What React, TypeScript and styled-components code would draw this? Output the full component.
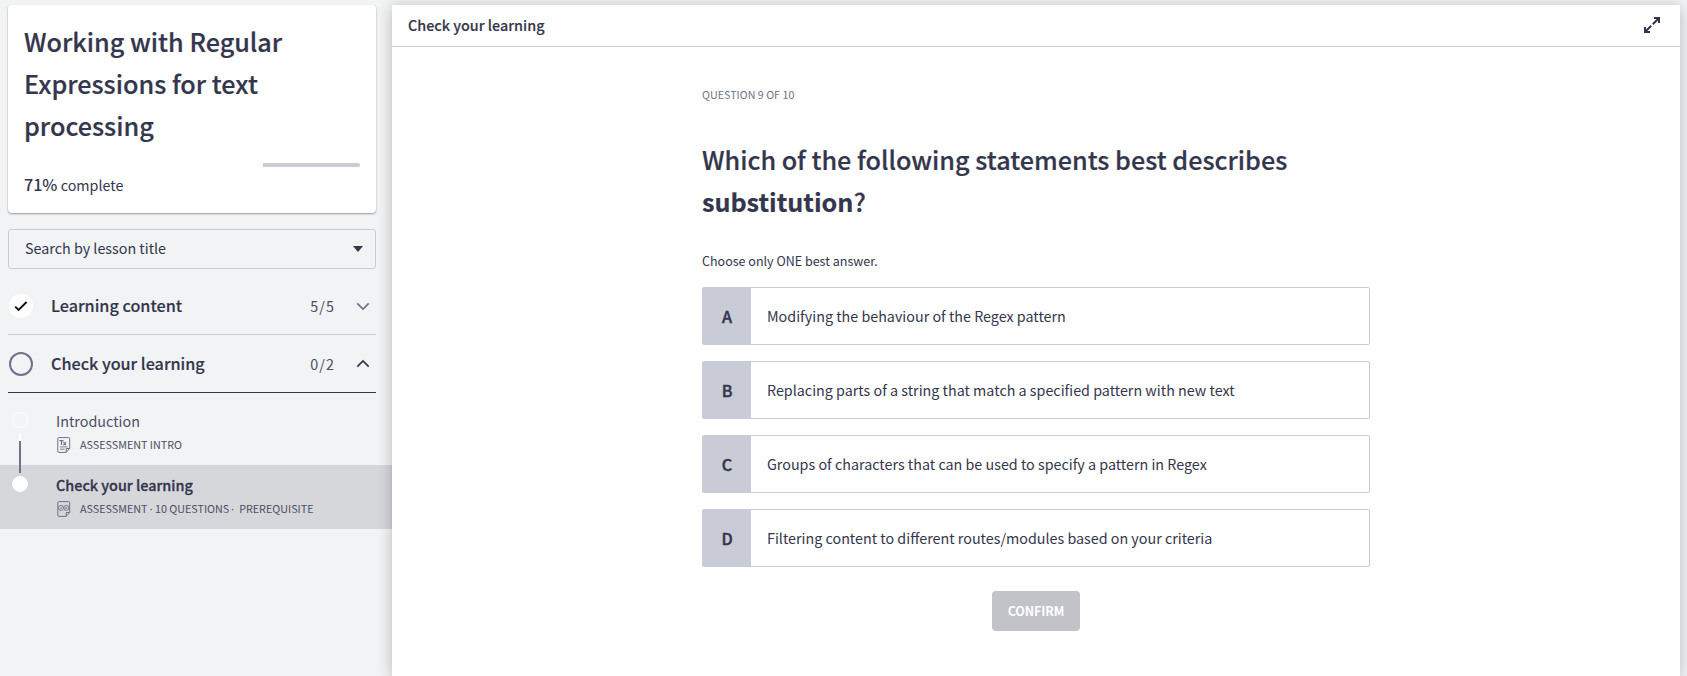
import React from 'react';
import styled, { createGlobalStyle } from 'styled-components';

const ink = '#33364c';
const line = '#c9ccd6';
const muted = '#6f7289';
const soft = '#4b4e64';

const GlobalStyle = createGlobalStyle`
  *, *::before, *::after { box-sizing: border-box; }
  body {
    margin: 0;
    background: #f1f3f5;
    color: ${ink};
    font-family: 'Noto Sans CJK SC', 'Noto Sans', sans-serif;
    overflow: hidden;
  }
  h1, h2, p { margin: 0; }
`;

const Page = styled.div`
  display: flex;
  width: 1687px;
  height: 676px;
  padding: 5px 7px 0 0;
  overflow: hidden;
`;

const Sidebar = styled.aside`
  flex: 0 0 392px;
  display: flex;
  flex-direction: column;
`;

const Text = styled.span<{ $size: number; $weight?: number; $track?: number; $color?: string; $stroke?: number }>`
  font-size: ${(p) => p.$size}px;
  font-weight: ${(p) => p.$weight ?? 400};
  letter-spacing: ${(p) => p.$track ?? 0}px;
  color: ${(p) => p.$color ?? ink};
  -webkit-text-stroke: ${(p) => p.$stroke ?? 0}px ${ink};
  white-space: nowrap;
`;

const CourseCard = styled.section`
  width: 368px;
  height: 208px;
  margin-left: 8px;
  padding: 15px 16px 0;
  background: #fff;
  border-radius: 4px;
  box-shadow: 0 1px 2px rgba(0, 0, 0, 0.38);
`;

const CourseTitle = styled.h1`
  height: 126px;
  font-size: 25.2px;
  font-weight: 500;
  line-height: 42px;
  white-space: nowrap;
  -webkit-text-stroke: 0.2px ${ink};
`;

const Progress = styled.div`
  display: flex;
  justify-content: flex-end;
  height: 4px;
  margin-top: 17px;
`;

const Remaining = styled.div`
  width: 97px;
  border-radius: 0 2px 2px 0;
  background: ${line};
`;

const Complete = styled.p`
  margin-top: 5px;
  line-height: 24px;
`;

const Search = styled.div`
  display: flex;
  align-items: center;
  justify-content: space-between;
  width: 368px;
  height: 40px;
  margin: 16px 0 8px 8px;
  padding: 0 12px 0 16px;
  border: 1px solid ${line};
  border-radius: 3px;
`;

const SearchLabel = styled.div`
  height: 38px;
  line-height: 35px;
`;

const Section = styled.div<{ $open?: boolean }>`
  display: flex;
  align-items: center;
  width: 368px;
  height: 58px;
  margin-left: 8px;
  padding: 0 6px 0 1px;
  border-bottom: 1px solid ${(p) => (p.$open ? ink : line)};
`;

const SectionMark = styled.div<{ $done?: boolean }>`
  display: flex;
  align-items: center;
  justify-content: center;
  width: 24px;
  height: 24px;
  margin-right: 18px;
  border-radius: 50%;
  border: ${(p) => (p.$done ? 'none' : `2px solid ${muted}`)};
  background: ${(p) => (p.$done ? '#fff' : 'transparent')};
`;

const SectionName = styled.div`
  flex: 1;
  padding-bottom: 2px;
`;

const Chevron = styled.svg`
  margin-left: 21px;
`;

const Lessons = styled.div`
  padding-top: 8px;
`;

const Lesson = styled.div<{ $active?: boolean }>`
  display: flex;
  height: 64px;
  padding-left: 12px;
  background: ${(p) => (p.$active ? '#d6d7db' : 'transparent')};
`;

const Rail = styled.div`
  display: flex;
  flex-direction: column;
  align-items: center;
  width: 16px;
  height: 72px;
  margin-right: 28px;
  padding-top: 11px;
  z-index: 1;
`;

const Dot = styled.div<{ $filled?: boolean }>`
  flex: none;
  width: 16px;
  height: 16px;
  border: 1px solid #fff;
  border-radius: 50%;
  background: ${(p) => (p.$filled ? '#fff' : 'transparent')};
`;

const Connector = styled.div`
  flex: none;
  width: 2px;
  height: 40px;
  margin-top: 5px;
  background: linear-gradient(#fff 8px, ${muted} 8px);
`;

const LessonBody = styled.div`
  display: flex;
  flex-direction: column;
  padding-top: 7px;
`;

const LessonTitle = styled.div`
  height: 25px;
  line-height: 24px;
`;

const LessonMeta = styled.div`
  display: flex;
  align-items: center;
  height: 24px;
  line-height: 24px;
  gap: 9px;
  padding-left: 1px;
`;

const Separator = styled.span<{ $left: number; $right: number }>`
  margin: 0 ${(p) => p.$right}px 0 ${(p) => p.$left}px;
  font-family: 'Noto Sans', sans-serif;
  line-height: 1;
`;

const Main = styled.main`
  flex: 1;
  display: flex;
  flex-direction: column;
  background: #fff;
  box-shadow: 0 2px 14px rgba(0, 0, 0, 0.24);
  z-index: 2;
`;

const TopBar = styled.header`
  display: flex;
  align-items: center;
  justify-content: space-between;
  height: 42px;
  padding: 0 19px 2px 16px;
  border-bottom: 1px solid ${line};
  line-height: 39px;
`;

const Question = styled.section`
  display: flex;
  flex-direction: column;
  width: 668px;
  margin: 33px 0 0 310px;
`;

const Counter = styled.p`
  height: 24px;
  line-height: 24px;
`;

const Prompt = styled.h2`
  margin-top: 34px;
  font-size: 25.18px;
  font-weight: 500;
  line-height: 42px;
  white-space: nowrap;
  -webkit-text-stroke: 0.2px ${ink};
  b { font-weight: 700; }
`;

const Hint = styled.p`
  margin-top: 25px;
  height: 24px;
  line-height: 24px;
`;

const Options = styled.div`
  display: flex;
  flex-direction: column;
  gap: 16px;
  margin-top: 16px;
`;

const Option = styled.div`
  display: flex;
  height: 58px;
  border: 1px solid ${line};
  border-radius: 2px;
  line-height: 56px;
`;

const OptionKey = styled.div`
  width: 48px;
  margin-right: 16px;
  background: ${line};
  text-align: center;
`;

const Confirm = styled.button`
  align-self: center;
  width: 88px;
  height: 40px;
  margin-top: 24px;
  padding: 0;
  border: 0;
  border-radius: 4px;
  background: #c2c2c9;
  font-family: inherit;
  line-height: 38px;
`;

function DocIcon({ kind }: { kind: 'text' | 'quiz' }) {
  return (
    <svg width="14" height="16" viewBox="0 0 14 16" fill="none" stroke={muted} strokeWidth="1">
      <path d="M1.800.6h9.900a1 1 0 0 1 1 1v9.800l-3.600 4H1.800a1 1 0 0 1-1-1V1.600a1 1 0 0 1 1-1z" />
      <path d="M12.600 11.500H9.200v3.800" />
      {kind === 'text' ? (
        <>
          <path d="M2.500 3.700h4M4.500 3.700v4.200M6.400 5.200l2.600 2.800M9 5.200L6.400 8" strokeWidth="1.200" />
          <path d="M3 9.900h7.500M3 12.200h4.500" strokeWidth="0.900" />
        </>
      ) : (
        <>
          <circle cx="4" cy="6.900" r="2.500" strokeWidth="0.900" />
          <circle cx="9.400" cy="6.900" r="2.500" strokeWidth="0.900" />
          <path d="M2.900 6.800l.9.900 1.700-2M8.600 6.100l1.600 1.600M10.200 6.100L8.600 7.700" strokeWidth="0.900" />
        </>
      )}
    </svg>
  );
}

function ChevronIcon({ up }: { up?: boolean }) {
  return (
    <Chevron width="14" height="14" viewBox="0 0 14 14" fill="none" stroke={up ? ink : muted} strokeWidth="1.700">
      <path d={up ? 'M1.300 9.700L7 4l5.700 5.700' : 'M1.300 4.300L7 10l5.700-5.700'} />
    </Chevron>
  );
}

const options = [
  ['A', 'Modifying the behaviour of the Regex pattern'],
  ['B', 'Replacing parts of a string that match a specified pattern with new text'],
  ['C', 'Groups of characters that can be used to specify a pattern in Regex'],
  ['D', 'Filtering content to different routes/modules based on your criteria'],
];

export default function App() {
  return (
    <Page>
      <GlobalStyle />
      <Sidebar>
        <CourseCard>
          <CourseTitle>
            Working with Regular<br />Expressions for text<br />processing
          </CourseTitle>
          <Progress><Remaining /></Progress>
          <Complete>
            <Text $size={16.1} $weight={500}>71%</Text>
            <Text $size={14.32}> complete</Text>
          </Complete>
        </CourseCard>
        <Search>
          <SearchLabel><Text $size={14.32}>Search by lesson title</Text></SearchLabel>
          <svg width="10" height="6" viewBox="0 0 10 6"><path d="M0 0h10L5 6z" fill={ink} /></svg>
        </Search>
        <Section>
          <SectionMark $done>
            <svg width="14" height="12" viewBox="0 0 14 12" fill="none" stroke="#111" strokeWidth="1.900">
              <path d="M1.200 6.600l3.400 3.300L12.600 2" />
            </svg>
          </SectionMark>
          <SectionName><Text $size={16.18} $weight={500} $stroke={0.15}>Learning content</Text></SectionName>
          <Text $size={14.32} $track={1.1} $color={soft}>5/5</Text>
          <ChevronIcon />
        </Section>
        <Section $open>
          <SectionMark />
          <SectionName><Text $size={16.18} $weight={500} $stroke={0.15}>Check your learning</Text></SectionName>
          <Text $size={14.32} $track={1.1} $color={soft}>0/2</Text>
          <ChevronIcon up />
        </Section>
        <Lessons>
          <Lesson>
            <Rail><Dot /><Connector /></Rail>
            <LessonBody>
              <LessonTitle><Text $size={14.35} $color={soft}>Introduction</Text></LessonTitle>
              <LessonMeta>
                <DocIcon kind="text" />
                <Text $size={10.76} $color={soft}>ASSESSMENT INTRO</Text>
              </LessonMeta>
            </LessonBody>
          </Lesson>
          <Lesson $active>
            <Rail><Dot $filled /></Rail>
            <LessonBody>
              <LessonTitle><Text $size={14.4} $weight={500} $stroke={0.3}>Check your learning</Text></LessonTitle>
              <LessonMeta>
                <DocIcon kind="quiz" />
                <Text $size={10.76} $color={soft}>
                  ASSESSMENT<Separator $left={2.3} $right={2.3}>·</Separator>10 QUESTIONS
                  <Separator $left={1.8} $right={2.8}>·</Separator> PREREQUISITE
                </Text>
              </LessonMeta>
            </LessonBody>
          </Lesson>
        </Lessons>
      </Sidebar>
      <Main>
        <TopBar>
          <Text $size={14.36} $weight={500} $stroke={0.15}>Check your learning</Text>
          <svg width="18" height="18" viewBox="0 0 18 18" fill="none" stroke={ink} strokeWidth="2">
            <path d="M11 2h5v5M16 2l-6.200 6.200M7 16H2v-5M2 16l6.200-6.200" />
          </svg>
        </TopBar>
        <Question>
          <Counter><Text $size={10.72} $color={muted}>QUESTION 9 OF 10</Text></Counter>
          <Prompt>
            Which of the following statements best describes<br /><b>substitution</b>?
          </Prompt>
          <Hint><Text $size={12.53}>Choose only ONE best answer.</Text></Hint>
          <Options>
            {options.map(([key, label]) => (
              <Option key={key}>
                <OptionKey><Text $size={16.1} $weight={500} $stroke={0.4}>{key}</Text></OptionKey>
                <Text $size={14.32}>{label}</Text>
              </Option>
            ))}
          </Options>
          <Confirm><Text $size={12.5} $weight={700} $track={-0.1} $color="#fff">CONFIRM</Text></Confirm>
        </Question>
      </Main>
    </Page>
  );
}
